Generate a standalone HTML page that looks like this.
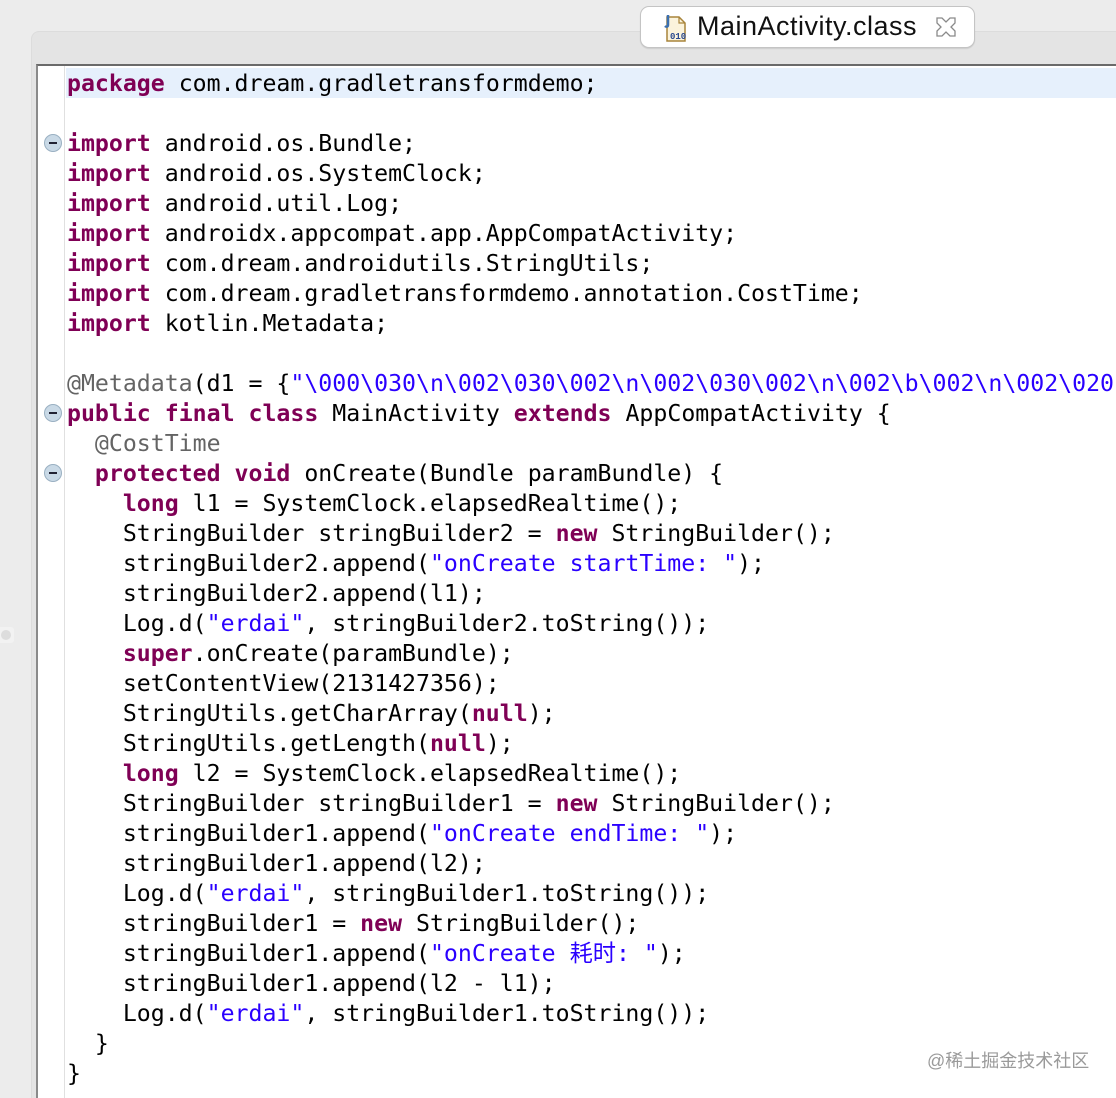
<!DOCTYPE html>
<html><head><meta charset="utf-8"><style>
html,body{margin:0;width:1116px;height:1098px;overflow:hidden}
body{background:#ececec;position:relative;font-family:"DejaVu Sans Mono","Liberation Mono","Noto Sans CJK SC",monospace}
.panel{position:absolute;left:31px;top:31px;width:1100px;height:1080px;background:#e4e4e4;border-radius:8px;border:1px solid #dcdcdc}
.editor{position:absolute;left:36px;top:64px;width:1090px;height:1040px;background:#fff;border-top:2px solid #6a6a6a;border-left:2px solid #8a8a8a}
.gl{position:absolute;left:64px;top:66px;width:1px;height:1040px;background:#e0e0e0}
.hl{position:absolute;left:66px;top:68px;width:1060px;height:30px;background:#e6f0fc}
.code{position:absolute;left:67px;top:69px;font-size:23.2px;line-height:30px;white-space:pre;color:#000}
.k{color:#7f0055;font-weight:bold}.s{color:#2a00ff}.a{color:#646464}
.tab{position:absolute;left:640px;top:6px;width:333px;height:40px;background:#fff;border:1px solid #c4c4c4;border-radius:9px;box-shadow:0 1px 1px rgba(0,0,0,.1)}
.tab .t{position:absolute;left:56px;top:4px;font-family:"Liberation Sans",sans-serif;font-size:27px;letter-spacing:0.5px;color:#111}
.fold{position:absolute;left:44px;width:18px;height:18px;border-radius:50%;background:#c9d9e6;border:1px solid #9ab0c2;box-sizing:border-box}
.fold:after{content:"";position:absolute;left:4px;top:7px;width:8px;height:2px;background:#223}
.wm{position:absolute;left:927px;top:1047px;font-family:"Liberation Sans","Noto Sans CJK SC",sans-serif;font-size:18px;color:#9a9a9a}
</style></head><body>
<div class="panel"></div>
<div style="position:absolute;left:0;top:627px;width:14px;height:16px;background:#f2f2f2;border-radius:0 3px 3px 0"></div>
<div style="position:absolute;left:1px;top:630px;width:10px;height:10px;border-radius:50%;background:#ddd"></div>
<div class="tab">
<svg style="position:absolute;left:20px;top:6px" width="30" height="30" viewBox="0 0 30 30">
<path d="M6 4h12l6 6v18H6z" fill="#fbf3dc" stroke="#a8843a" stroke-width="1.5"/>
<path d="M18 4v6h6" fill="none" stroke="#a8843a" stroke-width="1.2"/>
<path d="M7 2v10c0 2-2 2-3 1" fill="none" stroke="#3a6fb0" stroke-width="2.5"/>
<text x="9" y="26" font-size="9" font-family="Liberation Mono" fill="#2b4a90" font-weight="bold">010</text>
</svg>
<div class="t">MainActivity.class</div>
<svg style="position:absolute;left:294px;top:9px" width="22" height="22" viewBox="0 0 22 22"><path d="M2 2h5l4 4 4-4h5v5l-4 4 4 4v5h-5l-4-4-4 4H2v-5l4-4-4-4z" stroke="#8a8a8a" stroke-width="1.3" fill="none"/></svg>
</div>
<div class="editor"></div>
<div class="hl"></div>
<div class="gl"></div>
<div class="fold" style="top:134px"></div>
<div class="fold" style="top:404px"></div>
<div class="fold" style="top:464px"></div>
<div class="code"><span class="k">package</span> com.dream.gradletransformdemo;

<span class="k">import</span> android.os.Bundle;
<span class="k">import</span> android.os.SystemClock;
<span class="k">import</span> android.util.Log;
<span class="k">import</span> androidx.appcompat.app.AppCompatActivity;
<span class="k">import</span> com.dream.androidutils.StringUtils;
<span class="k">import</span> com.dream.gradletransformdemo.annotation.CostTime;
<span class="k">import</span> kotlin.Metadata;

<span class="a">@Metadata</span>(d1 = {<span class="s">"\000\030\n\002\030\002\n\002\030\002\n\002\b\002\n\002\020</span>
<span class="k">public</span> <span class="k">final</span> <span class="k">class</span> MainActivity <span class="k">extends</span> AppCompatActivity {
  <span class="a">@CostTime</span>
  <span class="k">protected</span> <span class="k">void</span> onCreate(Bundle paramBundle) {
    <span class="k">long</span> l1 = SystemClock.elapsedRealtime();
    StringBuilder stringBuilder2 = <span class="k">new</span> StringBuilder();
    stringBuilder2.append(<span class="s">"onCreate startTime: "</span>);
    stringBuilder2.append(l1);
    Log.d(<span class="s">"erdai"</span>, stringBuilder2.toString());
    <span class="k">super</span>.onCreate(paramBundle);
    setContentView(2131427356);
    StringUtils.getCharArray(<span class="k">null</span>);
    StringUtils.getLength(<span class="k">null</span>);
    <span class="k">long</span> l2 = SystemClock.elapsedRealtime();
    StringBuilder stringBuilder1 = <span class="k">new</span> StringBuilder();
    stringBuilder1.append(<span class="s">"onCreate endTime: "</span>);
    stringBuilder1.append(l2);
    Log.d(<span class="s">"erdai"</span>, stringBuilder1.toString());
    stringBuilder1 = <span class="k">new</span> StringBuilder();
    stringBuilder1.append(<span class="s">"onCreate 耗时: "</span>);
    stringBuilder1.append(l2 - l1);
    Log.d(<span class="s">"erdai"</span>, stringBuilder1.toString());
  }
}</div>
<div class="wm">@稀土掘金技术社区</div>
</body></html>
